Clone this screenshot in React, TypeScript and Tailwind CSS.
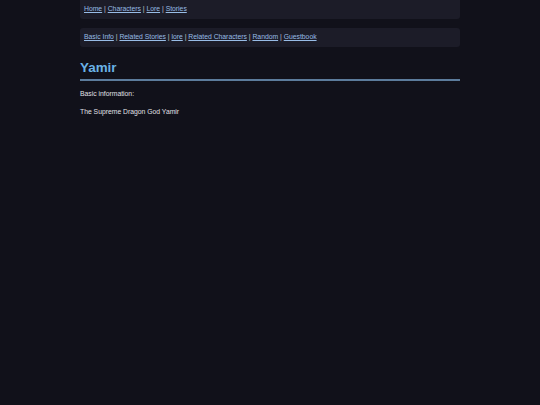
export default function App() {
  const nav1 = ["Home", "Characters", "Lore", "Stories"];
  const nav2 = ["Basic Info", "Related Stories", "lore", "Related Characters", "Random", "Guestbook"];
  const renderNav = (items: string[]) =>
    items.map((t, i) => (
      <span key={t}>
        {i > 0 && <span className="text-[#c8c8d0]"> | </span>}
        <a href="#" className="text-[#98bce6] underline">{t}</a>
      </span>
    ));
  return (
    <div className="min-h-[405px] w-full bg-[#11111a]" style={{ fontFamily: '"Liberation Sans", Arial, sans-serif' }}>
      <div className="mx-auto w-[380px] pt-0">
        <div className="flex h-[19px] items-center rounded-b-[3px] bg-[#1c1c28] px-[4px] text-[6.8px] leading-none">
          <div>{renderNav(nav1)}</div>
        </div>
        <div className="mt-[9px] flex h-[19px] items-center rounded-[3px] bg-[#1c1c28] px-[4px] text-[6.8px] leading-none">
          <div>{renderNav(nav2)}</div>
        </div>
        <h1 className="mt-[12px] border-b-2 border-[#5c7c9c] pb-[3px] text-[13.4px] font-bold leading-[17px] text-[#6ab2e6]">
          Yamir
        </h1>
        <div className="mt-[9px] text-[6.8px] leading-[8px] text-[#e0e0e6]">
          <p>Basic information:</p>
          <p className="mt-[10px]">The Supreme Dragon God Yamir</p>
        </div>
      </div>
    </div>
  );
}
